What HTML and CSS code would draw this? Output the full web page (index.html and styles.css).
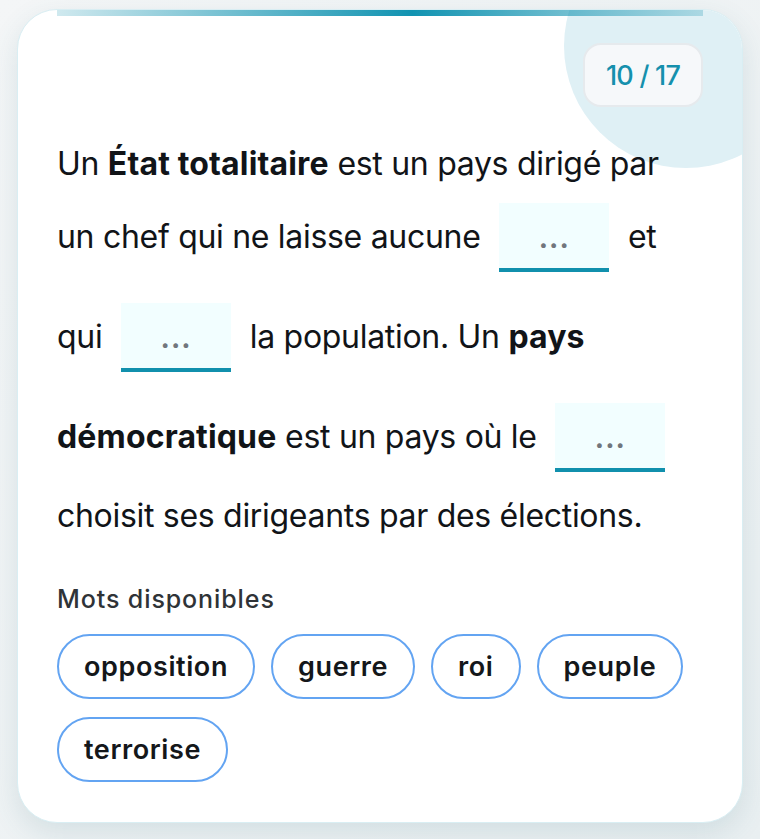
FILE: index.html
```html
<!DOCTYPE html>
<html lang="fr">
<head>
    <meta charset="UTF-8">
    <meta name="viewport" content="width=device-width, initial-scale=1.0">
    <title>Texte à trous</title>
    <link rel="stylesheet" href="styles.css">
</head>
<body>
    <!-- Carte d'exercice -->
    <div class="card">
        <div class="card-deco"></div>
        <div class="card-accent"></div>

        <div class="card-header">
            <div class="counter">10 / 17</div>
        </div>

        <!-- Texte à trous -->
        <p class="cloze">
            Un <strong>État totalitaire</strong> est un pays dirigé par
            un chef qui ne laisse aucune <span class="blank">...</span> et
            qui <span class="blank">...</span> la population. Un <strong>pays
            démocratique</strong> est un pays où le <span class="blank">...</span>
            choisit ses dirigeants par des élections.
        </p>

        <!-- Banque de mots -->
        <div class="word-bank">
            <div class="word-bank-title">Mots disponibles</div>
            <div class="chips">
                <button class="chip">opposition</button>
                <button class="chip">guerre</button>
                <button class="chip">roi</button>
                <button class="chip">peuple</button>
                <button class="chip">terrorise</button>
            </div>
        </div>
    </div>
</body>
</html>
```

FILE: styles.css
```css
/* Base */
* {
    margin: 0;
    padding: 0;
    box-sizing: border-box;
}

body {
    font-family: Inter, 'Noto Sans', sans-serif;
    background: linear-gradient(135deg, #f4f6f7 0%, #e9eff1 100%);
    min-height: 100vh;
    padding: 9px 17px 17px;
    color: #111418;
}

/* Carte */
.card {
    position: relative;
    overflow: hidden;
    background: #ffffff;
    border: 1px solid #d9eef3;
    border-radius: 40px;
    padding: 33px 39px 40px;
    box-shadow: 0 10px 28px rgba(60, 110, 125, 0.14);
}

.card-accent {
    position: absolute;
    top: 0;
    left: 39px;
    right: 39px;
    height: 6px;
    background: linear-gradient(90deg, rgba(17, 144, 173, 0.2), #1193b1 55%, rgba(17, 144, 173, 0.25));
}

.card-deco {
    position: absolute;
    top: -86px;
    right: -66px;
    width: 244px;
    height: 244px;
    border-radius: 50%;
    background: #dff0f5;
}

.card-header {
    position: relative;
    display: flex;
    justify-content: flex-end;
}

.counter {
    width: 120px;
    height: 64px;
    display: flex;
    align-items: center;
    justify-content: center;
    background: #f6f8fa;
    border: 2px solid #e6eaed;
    border-radius: 18px;
    color: #1590ad;
    font-size: 27px;
    font-weight: 500;
    letter-spacing: -0.8px;
}

/* Texte à trous */
.cloze {
    position: relative;
    margin-top: 31px;
    font-size: 32px;
    line-height: 52px;
    letter-spacing: -0.3px;
}

.cloze strong {
    font-weight: 700;
    letter-spacing: 0.15px;
}

.blank {
    display: inline-block;
    width: 110px;
    margin: 13px 10px 18px;
    padding: 22px 0 17px;
    font-size: 28px;
    font-weight: 700;
    line-height: 26px;
    letter-spacing: 1px;
    text-align: center;
    color: #71767d;
    background: #f2feff;
    border-bottom: 4px solid #1190ad;
}

/* Mots disponibles */
.word-bank {
    margin-top: 41px;
}

.word-bank-title {
    font-size: 25px;
    line-height: 32px;
    font-weight: 500;
    letter-spacing: 0.9px;
    color: #2f3337;
    margin-bottom: 19px;
}

.chips {
    display: flex;
    flex-wrap: wrap;
    gap: 18px 16px;
}

.chip {
    font-family: inherit;
    font-size: 27px;
    font-weight: 600;
    line-height: 32px;
    letter-spacing: 0.6px;
    color: #14171a;
    background: #ffffff;
    border: 2px solid #63a4f2;
    border-radius: 999px;
    padding: 14.5px 25px;
    cursor: pointer;
}
```
